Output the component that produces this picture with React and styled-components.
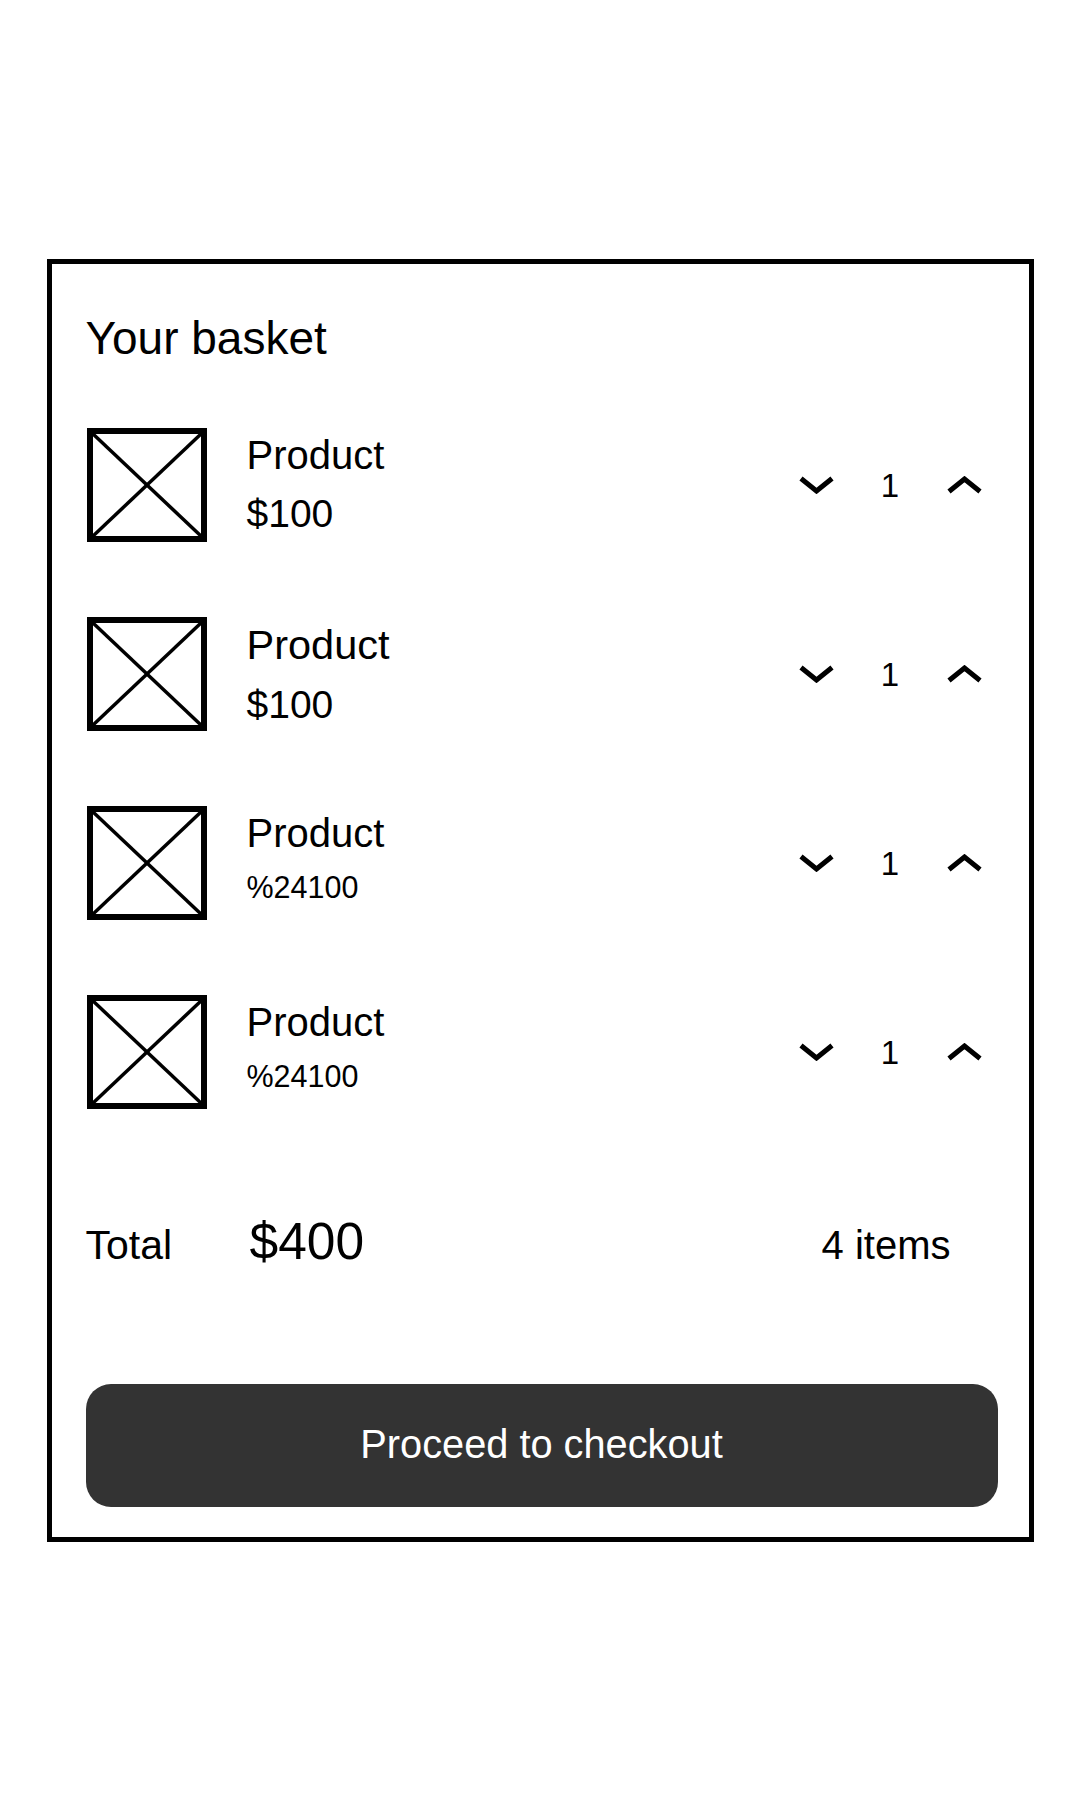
import styled, { createGlobalStyle } from 'styled-components';

const items = [
  { id: 1, name: 'Product', price: '$100', qty: 1 },
  { id: 2, name: 'Product', price: '$100', qty: 1, nameSize: 41.5 },
  { id: 3, name: 'Product', price: '%24100', qty: 1, small: true },
  { id: 4, name: 'Product', price: '%24100', qty: 1, small: true },
];

function Placeholder() {
  return (
    <Thumb viewBox='0 0 120 114' aria-hidden='true'>
      <rect x='3' y='3' width='114' height='108' fill='none' stroke='#000' strokeWidth='6' />
      <line x1='5' y1='5' x2='115' y2='109' stroke='#000' strokeWidth='3.5' />
      <line x1='115' y1='5' x2='5' y2='109' stroke='#000' strokeWidth='3.5' />
    </Thumb>
  );
}

function Chevron({ up }) {
  return (
    <svg width='35' height='18' viewBox='0 0 35 18' aria-hidden='true'>
      <polyline
        points={up ? '2,15.5 17.5,3 33,15.5' : '2,2.5 17.5,15 33,2.5'}
        fill='none'
        stroke='#000'
        strokeWidth='5'
      />
    </svg>
  );
}

function BasketRow({ item }) {
  return (
    <Row>
      <Placeholder />
      <Info>
        <Name $size={item.nameSize}>{item.name}</Name>
        <Price $small={item.small}>{item.price}</Price>
      </Info>
      <Qty>
        <Step type='button' aria-label='Decrease'>
          <Chevron />
        </Step>
        <Count>{item.qty}</Count>
        <Step type='button' aria-label='Increase'>
          <Chevron up />
        </Step>
      </Qty>
    </Row>
  );
}

export default function App() {
  return (
    <>
      <GlobalStyle />
      <Page>
        <Card>
          <Title>Your basket</Title>
          <List>
            {items.map((item) => (
              <BasketRow key={item.id} item={item} />
            ))}
          </List>
          <Totals>
            <TotalLabel>Total</TotalLabel>
            <TotalValue>$400</TotalValue>
            <ItemCount>4 items</ItemCount>
          </Totals>
          <Checkout type='button'>Proceed to checkout</Checkout>
        </Card>
      </Page>
    </>
  );
}

const GlobalStyle = createGlobalStyle`
  body {
    margin: 0;
    background: #fff;
    color: #000;
    font-family: 'Liberation Sans', Arial, sans-serif;
  }
`;

const Page = styled.main`
  display: flex;
  justify-content: center;
  padding-top: 259px;
`;

const Card = styled.section`
  display: flex;
  flex-direction: column;
  box-sizing: border-box;
  width: 987px;
  padding: 51px 31px 30px 34px;
  border: 5px solid #000;
`;

const Title = styled.h1`
  margin: 0;
  font-size: 46px;
  font-weight: 400;
  line-height: 1;
`;

const List = styled.ul`
  display: flex;
  flex-direction: column;
  gap: 75px;
  margin: 67px 0 0;
  padding: 0;
  list-style: none;
`;

const Row = styled.li`
  display: flex;
  align-items: center;
  height: 114px;
`;

const Thumb = styled.svg`
  flex-shrink: 0;
  width: 120px;
  height: 114px;
  margin-left: 1px;
`;

const Info = styled.div`
  display: flex;
  flex: 1;
  flex-direction: column;
  gap: 19px;
  align-self: flex-start;
  margin: 7px 0 0 40px;
`;

const Name = styled.span`
  font-size: ${(p) => p.$size || 40}px;
  line-height: 1;
`;

const Price = styled.span`
  font-size: ${(p) => (p.$small ? 30.5 : 39)}px;
  line-height: 1;
`;

const Qty = styled.div`
  display: flex;
  align-items: center;
  margin-right: 16px;
`;

const Step = styled.button`
  display: flex;
  width: 35px;
  height: 18px;
  padding: 0;
  border: none;
  background: transparent;
  cursor: pointer;
`;

const Count = styled.span`
  width: 113px;
  font-size: 33px;
  line-height: 1;
  text-align: center;
`;

const Totals = styled.div`
  display: flex;
  align-items: baseline;
  margin-top: 107px;
`;

const TotalLabel = styled.span`
  width: 164px;
  font-size: 41px;
  line-height: 1;
`;

const TotalValue = styled.span`
  flex: 1;
  font-size: 51.5px;
  line-height: 1;
`;

const ItemCount = styled.span`
  margin-right: 47px;
  font-size: 40px;
  line-height: 1;
`;

const Checkout = styled.button`
  width: 100%;
  height: 123px;
  margin-top: 116px;
  padding: 0;
  border: none;
  border-radius: 25px;
  background: #333;
  color: #fff;
  font-family: inherit;
  font-size: 39.75px;
  line-height: 1;
  cursor: pointer;
`;
